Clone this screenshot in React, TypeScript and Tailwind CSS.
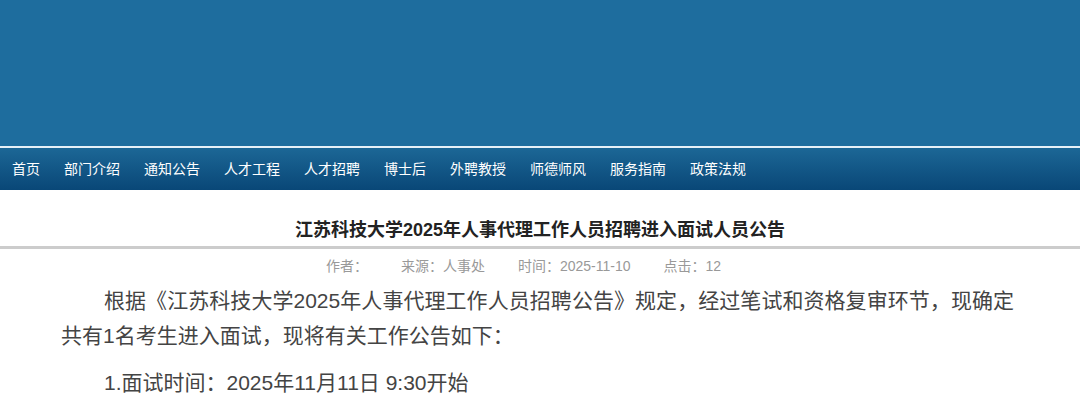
const navItems = ['首页', '部门介绍', '通知公告', '人才工程', '人才招聘', '博士后', '外聘教授', '师德师风', '服务指南', '政策法规']

const meta = [
  { label: '作者：', value: '' },
  { label: '来源：', value: '人事处' },
  { label: '时间：', value: '2025-11-10' },
  { label: '点击：', value: '12' },
]

export default function App() {
  return (
    <div className="min-h-[400px] w-[1080px] overflow-hidden bg-white font-['Liberation_Sans','Noto_Sans_CJK_SC',sans-serif]">
      <header className="h-[146px] bg-[#1e6d9e]" />
      <div className="h-[2px] bg-[#e6f0f7]" />
      <nav className="flex h-[42px] items-center bg-gradient-to-b from-[#1c6796] to-[#094777]">
        {navItems.map((item) => (
          <a key={item} href="#" className="px-[12px] text-[14px] leading-none text-white">
            {item}
          </a>
        ))}
      </nav>

      <main>
        <h1 className="pt-[28px] pb-[4px] text-center text-[18px] font-bold leading-[24px] text-[#222]">
          江苏科技大学2025年人事代理工作人员招聘进入面试人员公告
        </h1>
        <div className="h-[3px] bg-[#cccccc]" />
        <div className="flex justify-center pt-[7px] text-[14px] leading-[20px] text-[#999]">
          {meta.map((m) => (
            <span key={m.label} className="mr-[33px]">
              {m.label}
              {m.value}
            </span>
          ))}
        </div>

        <div className="pl-[61px] pr-[66px] pt-[7px] text-[21px] leading-[35px] text-[#444]">
          <p className="text-justify indent-[43px]">
            根据《江苏科技大学2025年人事代理工作人员招聘公告》规定，经过笔试和资格复审环节，现确定共有1名考生进入面试，现将有关工作公告如下：
          </p>
          <p className="mt-[12px] indent-[43px]">1.面试时间：2025年11月11日 9:30开始</p>
        </div>
      </main>
    </div>
  )
}
